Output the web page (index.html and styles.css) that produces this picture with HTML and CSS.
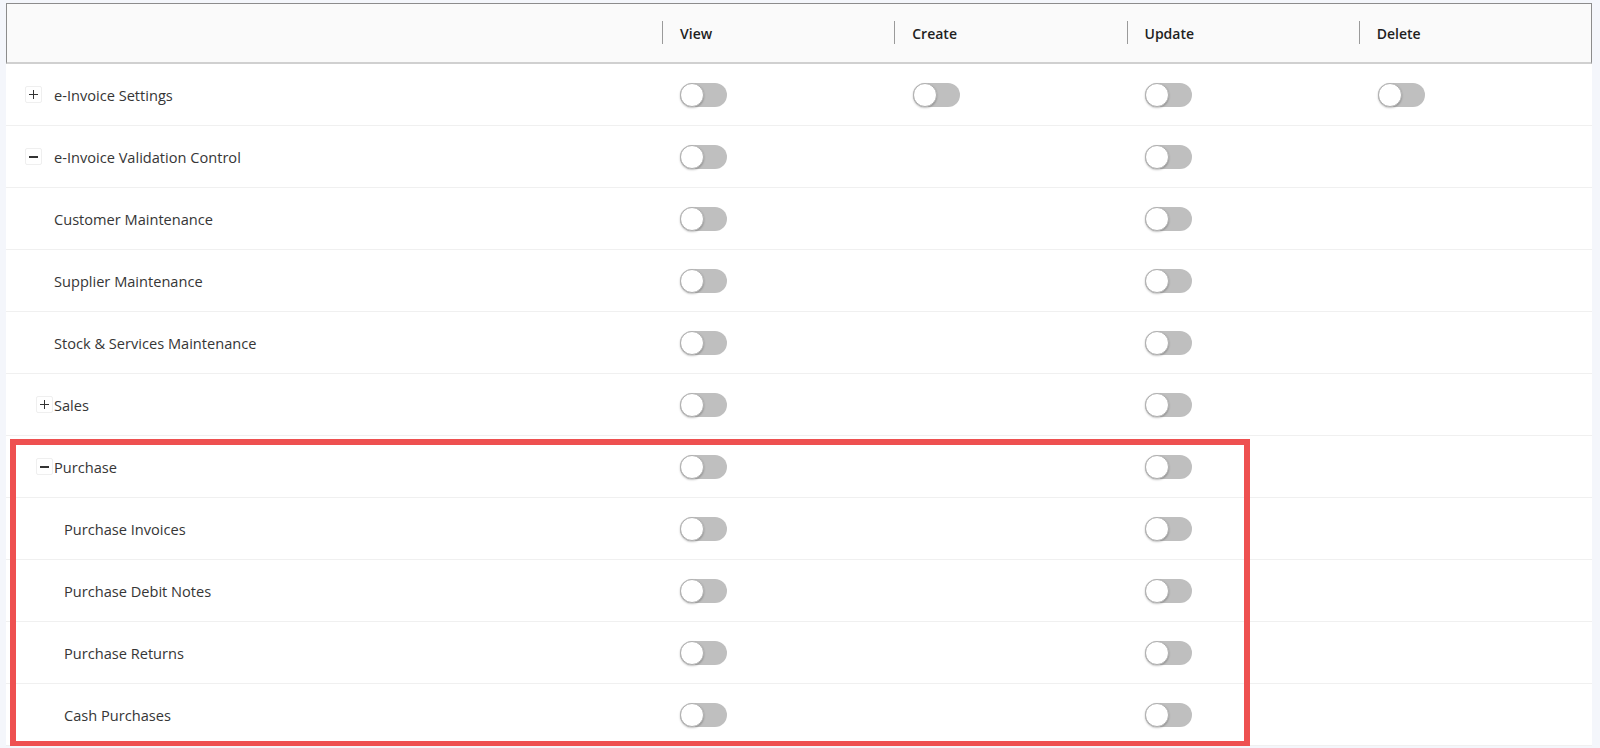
FILE: index.html
```html
<!DOCTYPE html>
<html lang="en">
<head>
  <meta charset="UTF-8" />
  <meta name="viewport" content="width=device-width, initial-scale=1.0" />
  <title>Access Rights</title>
  <link rel="stylesheet" href="styles.css">
</head>
<body>

  <div class="grid">
    <div class="head">
      <div class="th"></div>
      <div class="th sep">View</div>
      <div class="th sep">Create</div>
      <div class="th sep">Update</div>
      <div class="th sep">Delete</div>
    </div>

    <div class="row">
      <div class="name lvl0"><span class="expand plus"></span>e-Invoice Settings</div>
      <div class="td"><span class="switch"></span></div>
      <div class="td"><span class="switch"></span></div>
      <div class="td"><span class="switch"></span></div>
      <div class="td"><span class="switch"></span></div>
    </div>
    <div class="row">
      <div class="name lvl0"><span class="expand minus"></span>e-Invoice Validation Control</div>
      <div class="td"><span class="switch"></span></div>
      <div class="td"></div>
      <div class="td"><span class="switch"></span></div>
      <div class="td"></div>
    </div>
    <div class="row">
      <div class="name lvl1">Customer Maintenance</div>
      <div class="td"><span class="switch"></span></div>
      <div class="td"></div>
      <div class="td"><span class="switch"></span></div>
      <div class="td"></div>
    </div>
    <div class="row">
      <div class="name lvl1">Supplier Maintenance</div>
      <div class="td"><span class="switch"></span></div>
      <div class="td"></div>
      <div class="td"><span class="switch"></span></div>
      <div class="td"></div>
    </div>
    <div class="row">
      <div class="name lvl1">Stock &amp; Services Maintenance</div>
      <div class="td"><span class="switch"></span></div>
      <div class="td"></div>
      <div class="td"><span class="switch"></span></div>
      <div class="td"></div>
    </div>
    <div class="row">
      <div class="name lvl1-parent"><span class="expand plus"></span>Sales</div>
      <div class="td"><span class="switch"></span></div>
      <div class="td"></div>
      <div class="td"><span class="switch"></span></div>
      <div class="td"></div>
    </div>
    <div class="row">
      <div class="name lvl1-parent"><span class="expand minus"></span>Purchase</div>
      <div class="td"><span class="switch"></span></div>
      <div class="td"></div>
      <div class="td"><span class="switch"></span></div>
      <div class="td"></div>
    </div>
    <div class="row">
      <div class="name lvl2">Purchase Invoices</div>
      <div class="td"><span class="switch"></span></div>
      <div class="td"></div>
      <div class="td"><span class="switch"></span></div>
      <div class="td"></div>
    </div>
    <div class="row">
      <div class="name lvl2">Purchase Debit Notes</div>
      <div class="td"><span class="switch"></span></div>
      <div class="td"></div>
      <div class="td"><span class="switch"></span></div>
      <div class="td"></div>
    </div>
    <div class="row">
      <div class="name lvl2">Purchase Returns</div>
      <div class="td"><span class="switch"></span></div>
      <div class="td"></div>
      <div class="td"><span class="switch"></span></div>
      <div class="td"></div>
    </div>
    <div class="row">
      <div class="name lvl2">Cash Purchases</div>
      <div class="td"><span class="switch"></span></div>
      <div class="td"></div>
      <div class="td"><span class="switch"></span></div>
      <div class="td"></div>
    </div>

    <div class="highlight"></div>
  </div>

</body>
</html>
```

FILE: styles.css
```css
body {
  font-family: "Open Sans", Arial, sans-serif;
  font-size: 14px;
  color: #333;
  background: #f4f6fb;
  margin: 0;
  padding: 3px 8px 0 6px;
}

.grid {
  position: relative;
  background: white;
}

.head, .row {
  display: grid;
  align-items: center;
}

.head {
  grid-template-columns: 655px repeat(4, 1fr);
  height: 61px;
  background: #fafafa;
  border: 1px solid #8c8c8c;
  border-bottom: 2px solid #d0d0d0;
  box-sizing: border-box;
}

.th {
  position: relative;
  padding-left: 18px;
  font-weight: 600;
  color: #1f1f1f;
}

.th.sep::before {
  content: "";
  position: absolute;
  left: 0;
  top: 50%;
  width: 1px;
  height: 23px;
  margin-top: -12px;
  background: #9a9a9a;
}

.row {
  grid-template-columns: 656px repeat(4, 1fr);
  height: 62px;
  border-bottom: 1px solid #f0f0f0;
  box-sizing: border-box;
}

.name {
  display: flex;
  align-items: center;
  font-size: 14.6px;
  color: #363636;
}

.lvl0 { padding-left: 19px; }
.lvl0 .expand { margin-right: 12px; }
.lvl1 { padding-left: 48px; }
.lvl1-parent { padding-left: 30px; }
.lvl1-parent .expand { margin-right: 1px; }
.lvl2 { padding-left: 58px; }

.expand {
  position: relative;
  width: 17px;
  height: 17px;
  border: 1px solid #efefef;
  border-radius: 2px;
  box-sizing: border-box;
  background: white;
}

.expand::before, .expand::after {
  content: "";
  position: absolute;
  background: #333;
}

.expand::before {
  left: 3px;
  right: 3px;
  top: 7px;
  height: 1px;
}

.plus::after {
  top: 3px;
  bottom: 3px;
  left: 7px;
  width: 1px;
}

.minus::before {
  top: 6.5px;
  height: 2px;
}

.td {
  padding-left: 18px;
  display: flex;
  align-items: center;
}

.switch {
  position: relative;
  display: inline-block;
  width: 47px;
  height: 24px;
  border-radius: 12px;
  background: #bfbfbf;
}

.switch::after {
  content: "";
  position: absolute;
  left: 0;
  top: 0;
  width: 24px;
  height: 24px;
  border-radius: 50%;
  background: white;
  box-sizing: border-box;
  border: 1px solid #b0b0b0;
  box-shadow: 0 1px 2px rgba(0,0,0,0.25);
}

.highlight {
  position: absolute;
  left: 4px;
  top: 436px;
  width: 1240px;
  height: 308px;
  border: 6px solid #ee5050;
  box-sizing: border-box;
  pointer-events: none;
}
```
